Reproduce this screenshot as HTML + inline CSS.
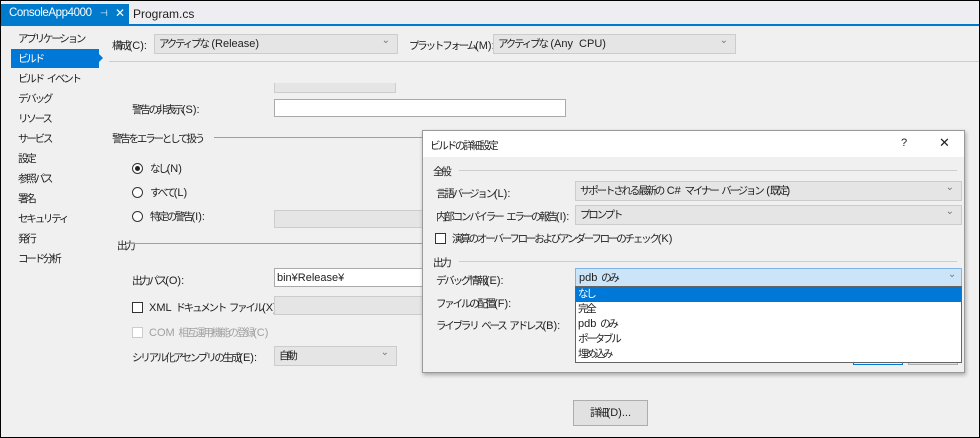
<!DOCTYPE html>
<html><head><meta charset="utf-8"><style>
*{box-sizing:border-box;margin:0;padding:0}
body{width:980px;height:438px;overflow:hidden;background:#f0f0f0;font-family:"Liberation Sans","Noto Sans CJK JP",sans-serif;font-size:11px;color:#1e1e1e;position:relative}
.a{position:absolute;white-space:nowrap}
.j{letter-spacing:-2.2px;font-size:10.5px;word-spacing:3px}
.l{letter-spacing:0;font-size:11px}
.cb{position:absolute;background:#e5e5e5;border:1px solid #ccc;padding:2px 4px;line-height:14px;white-space:nowrap}
.cb:after{content:"⌄";position:absolute;right:7px;top:-1px;color:#777;font-size:10px;letter-spacing:0}
.tb{position:absolute;background:#fff;border:1px solid #aaa;padding:2px 2px;line-height:14px}
.hr{position:absolute;height:1px;background:#a0a0a0}
.chk{display:inline-block;width:11px;height:11px;border:1px solid #333;background:#fff;vertical-align:-2px;margin-right:6px}
.rad{display:inline-block;width:11px;height:11px;border:1px solid #333;border-radius:50%;background:#fff;vertical-align:-2px;margin-right:7px;position:relative}
</style></head><body>
<div class="a" style="left:0;top:0;width:980px;height:438px;border:1px solid #000;z-index:50;pointer-events:none"></div>
<div class="a" style="left:0;top:0;width:980px;height:28px;background:#eeeef2"></div>
<div class="a" style="left:1px;top:4px;width:128px;height:21px;background:#007acc;color:#fff;font-size:11.5px;padding:3px 0 0 8px;letter-spacing:-0.4px">ConsoleApp4000</div>
<div class="a" style="left:100px;top:8px;color:#fff;font-size:9px">⊣</div>
<div class="a" style="left:115px;top:6px;color:#fff;font-size:12px">✕</div>
<div class="a" style="left:133px;top:7px;font-size:12px">Program.cs</div>
<div class="a" style="left:1px;top:24px;width:978px;height:2px;background:#007acc"></div>
<div class="a" style="left:11px;top:49px;width:88px;height:19px;background:#0078d7"></div>
<div class="a" style="left:99px;top:54px;width:0;height:0;border-left:4px solid #0078d7;border-top:4px solid transparent;border-bottom:4px solid transparent"></div>
<div class="a j" style="left:18px;top:29px;line-height:20px">アプリケーション<br><span style="color:#fff">ビルド</span><br>ビルド イベント<br>デバッグ<br>リソース<br>サービス<br>設定<br>参照パス<br>署名<br>セキュリティ<br>発行<br>コード分析</div>
<div class="a j" style="left:112px;top:38px">構成<span class="l">(C):</span></div>
<div class="cb j" style="left:154px;top:34px;width:244px;height:20px">アクティブな <span class="l">(Release)</span></div>
<div class="a j" style="left:409px;top:38px">プラットフォーム<span class="l">(M):</span></div>
<div class="cb j" style="left:493px;top:34px;width:243px;height:20px">アクティブな <span class="l">(Any CPU)</span></div>
<div class="hr" style="left:109px;top:61px;width:871px;background:#ccc"></div>
<div class="a" style="left:274px;top:83px;width:122px;height:10px;background:#e5e5e5;border:1px solid #ccc;border-top:none"></div>
<div class="a j" style="left:132px;top:102px">警告の非表示<span class="l">(S):</span></div>
<div class="tb" style="left:274px;top:99px;width:292px;height:18px"></div>
<div class="a j" style="left:112px;top:131px">警告をエラーとして扱う</div>
<div class="hr" style="left:214px;top:137px;width:210px"></div>
<div class="a j" style="left:132px;top:161px"><span class="rad"><span style="position:absolute;left:2px;top:2px;width:5px;height:5px;border-radius:50%;background:#222"></span></span>なし<span class="l">(N)</span></div>
<div class="a j" style="left:132px;top:185px"><span class="rad"></span>すべて<span class="l">(L)</span></div>
<div class="a j" style="left:132px;top:209px"><span class="rad"></span>特定の警告<span class="l">(I):</span></div>
<div class="a" style="left:274px;top:210px;width:150px;height:18px;background:#e5e5e5;border:1px solid #ccc"></div>
<div class="a j" style="left:117px;top:238px">出力</div>
<div class="hr" style="left:128px;top:243px;width:296px"></div>
<div class="a j" style="left:132px;top:273px">出力パス<span class="l">(O):</span></div>
<div class="tb" style="left:274px;top:268px;width:150px;height:19px">bin¥Release¥</div>
<div class="a j" style="left:132px;top:300px"><span class="chk"></span><span class="l">XML</span> ドキュメント ファイル<span class="l">(X):</span></div>
<div class="a" style="left:274px;top:296px;width:150px;height:19px;background:#e5e5e5;border:1px solid #ccc"></div>
<div class="a j" style="left:132px;top:325px;color:#a0a0a0"><span class="chk" style="border-color:#ccc"></span><span class="l">COM</span> 相互運用機能の登録<span class="l">(C)</span></div>
<div class="a j" style="left:132px;top:350px">シリアル化アセンブリの生成<span class="l">(E):</span></div>
<div class="cb j" style="left:274px;top:346px;width:123px;height:20px">自動</div>
<div class="a j" style="left:573px;top:400px;width:75px;height:26px;background:#e1e1e1;border:1px solid #adadad;text-align:center;line-height:24px">詳細<span class="l">(D)...</span></div>
<div class="a" style="left:422px;top:130px;width:543px;height:243px;background:#f0f0f0;border:1px solid #999;box-shadow:1px 2px 4px rgba(0,0,0,.3)">
<div class="a" style="left:0;top:0;width:541px;height:26px;background:#fff"></div>
<div class="a j" style="left:7px;top:7px">ビルドの詳細設定</div>
<div class="a" style="left:478px;top:6px">?</div>
<div class="a" style="left:516px;top:4px;font-size:13px">✕</div>
<div class="a j" style="left:10px;top:33px">全般</div>
<div class="hr" style="left:36px;top:39px;width:498px;background:#ccc"></div>
<div class="a j" style="left:13px;top:55px">言語バージョン<span class="l">(L):</span></div>
<div class="cb j" style="left:152px;top:50px;width:387px;height:20px">サポートされる最新の <span class="l">C#</span> マイナー バージョン <span class="l">(</span>既定<span class="l">)</span></div>
<div class="a j" style="left:13px;top:78px">内部コンパイラー エラーの報告<span class="l">(I):</span></div>
<div class="cb j" style="left:152px;top:74px;width:387px;height:20px">プロンプト</div>
<div class="a j" style="left:12px;top:100px"><span class="chk"></span>演算のオーバーフローおよびアンダーフローのチェック<span class="l">(K)</span></div>
<div class="a j" style="left:10px;top:124px">出力</div>
<div class="hr" style="left:36px;top:130px;width:498px;background:#ccc"></div>
<div class="a j" style="left:13px;top:142px">デバッグ情報<span class="l">(E):</span></div>
<div class="a j" style="left:152px;top:137px;width:387px;height:20px;background:#cce4f7;border:1px solid #7eb4ea;padding:2px 3px;line-height:14px"><span class="l">pdb</span> のみ<span style="position:absolute;right:7px;top:-1px;color:#777;font-size:10px">⌄</span></div>
<div class="a j" style="left:13px;top:165px">ファイルの配置<span class="l">(F):</span></div>
<div class="a j" style="left:13px;top:187px">ライブラリ ベース アドレス<span class="l">(B):</span></div>
<div class="a" style="left:430px;top:226px;width:50px;height:8px;background:#e5f1fb;border:1px solid #0078d7"></div>
<div class="a" style="left:485px;top:226px;width:50px;height:8px;background:#e1e1e1;border:1px solid #adadad"></div>
<div class="a j" style="left:152px;top:155px;width:387px;height:77px;background:#fff;border:1px solid #646464;line-height:15px">
<div style="background:#0078d7;color:#fff;padding-left:2px;height:15px">なし</div>
<div style="padding-left:2px">完全</div><div style="padding-left:2px"><span class="l">pdb</span> のみ</div><div style="padding-left:2px">ポータブル</div><div style="padding-left:2px">埋め込み</div>
</div>
</div>
</body></html>
